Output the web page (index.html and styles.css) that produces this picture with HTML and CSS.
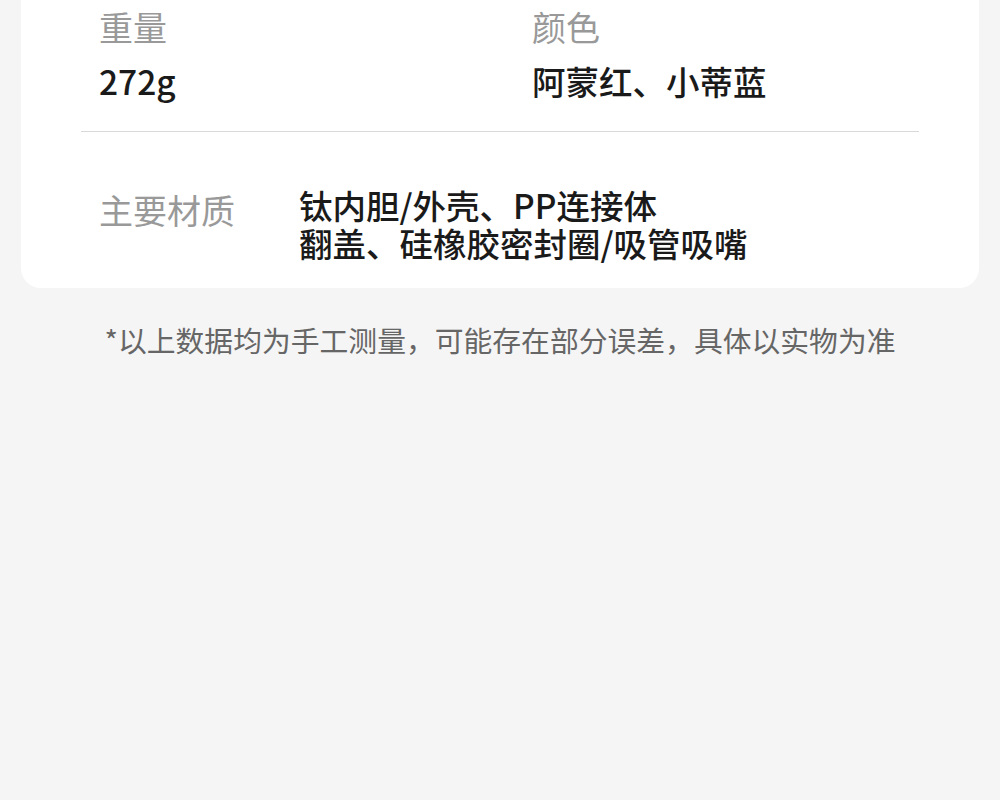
FILE: index.html
```html
<!DOCTYPE html>
<html lang="zh-CN">
	<head>
		<meta charset="UTF-8" />
		<meta name="viewport" content="width=device-width, initial-scale=1.0" />
		<title>产品参数</title>
		<link rel="stylesheet" href="styles.css">
	</head>
	<body>
		<div class="card">
			<div class="spec-grid">
				<div class="spec">
					<div class="label">重量</div>
					<div class="value">272g</div>
				</div>
				<div class="spec">
					<div class="label">颜色</div>
					<div class="value">阿蒙红、小蒂蓝</div>
				</div>
			</div>
			<div class="divider"></div>
			<div class="material">
				<div class="label">主要材质</div>
				<div class="value">
					<div>钛内胆/外壳、PP连接体</div>
					<div>翻盖、硅橡胶密封圈/吸管吸嘴</div>
				</div>
			</div>
		</div>
		<p class="note">*以上数据均为手工测量，可能存在部分误差，具体以实物为准</p>
	</body>
</html>
```

FILE: styles.css
```css
* {
	font-family: "Noto Sans CJK SC", "Noto Sans", sans-serif;
	box-sizing: border-box;
}
body {
	margin: 0;
	min-height: 100vh;
	background-color: #f5f5f5;
}
.card {
	margin: 0 21px;
	padding: 7px 60px 26px;
	background-color: #fff;
	border-radius: 0 0 20px 20px;
}
.label {
	font-size: 34px;
	line-height: 40px;
	color: #999;
}
.value {
	font-size: 33.5px;
	line-height: 40px;
	font-weight: 500;
	color: #1a1a1a;
}
.spec-grid {
	display: grid;
	grid-template-columns: 433px 1fr;
	padding-left: 18px;
}
.spec {
	display: flex;
	flex-direction: column;
	gap: 14px;
}
.divider {
	height: 1px;
	margin-top: 30px;
	background-color: #d9d9d9;
}
.material {
	display: flex;
	padding: 54px 0 0 18px;
}
.material .label {
	width: 200px;
	flex-shrink: 0;
	padding-top: 5px;
	line-height: 38px;
}
.material .value {
	display: flex;
	flex-direction: column;
	line-height: 38px;
}
.note {
	margin: 32px 0 0;
	text-align: center;
	font-size: 28.8px;
	line-height: 40px;
	color: #666;
}
```
